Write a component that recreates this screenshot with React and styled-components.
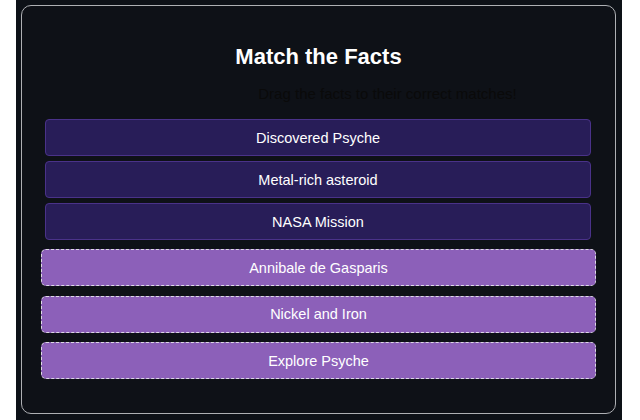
import React from 'react'
import { styled, createGlobalStyle } from 'styled-components'

const facts = ['Discovered Psyche', 'Metal-rich asteroid', 'NASA Mission']
const matches = ['Annibale de Gasparis', 'Nickel and Iron', 'Explore Psyche']

function App() {
  return (
    <>
      <GlobalStyle />
      <Page>
        <Card>
          <Title>Match the Facts</Title>
          <Subtitle>Drag the facts to their correct matches!</Subtitle>
          <FactList>
            {facts.map((fact) => (
              <Fact key={fact}>{fact}</Fact>
            ))}
          </FactList>
          <MatchList>
            {matches.map((match) => (
              <Match key={match}>{match}</Match>
            ))}
          </MatchList>
        </Card>
      </Page>
    </>
  )
}

const GlobalStyle = createGlobalStyle`
    html, body {
        margin: 0;
        padding: 0;
        background-color: #ffffff;
    }
    * {
        box-sizing: border-box;
    }
`;

const Page = styled.div`
    width: 606px;
    height: 420px;
    margin-left: 16px;
    padding: 5px 6px 6px 5px;
    background-color: #0d1117;
    font-family: "Liberation Sans", Arial, sans-serif;
`;

const Card = styled.div`
    width: 100%;
    height: 100%;
    border: 1px solid #aeb0b4;
    border-radius: 10px;
    background-color: #0e1117;
    padding-top: 37px;
    display: flex;
    flex-direction: column;
`;

const Title = styled.h2`
    margin: 0;
    text-align: center;
    font-size: 22px;
    line-height: 27px;
    font-weight: bold;
    color: #ffffff;
`;

const Subtitle = styled.p`
    margin: 15px 0 0 0;
    padding-left: 138px;
    text-align: center;
    font-size: 15px;
    line-height: 18px;
    color: #0a0a0a;
`;

const FactList = styled.div`
    display: flex;
    flex-direction: column;
    gap: 5px;
    margin-top: 16px;
    padding: 0 24px 0 23px;
`;

const Fact = styled.div`
    height: 37px;
    display: flex;
    align-items: center;
    justify-content: center;
    background-color: #281d58;
    border: 1px solid #4a3289;
    border-radius: 4px;
    color: #ffffff;
    font-size: 14.5px;
`;

const MatchList = styled.div`
    display: flex;
    flex-direction: column;
    gap: 9.5px;
    margin-top: 9px;
    padding: 0 19px;
`;

const Match = styled.div`
    height: 37px;
    display: flex;
    align-items: center;
    justify-content: center;
    background-color: #8c60b9;
    border: 1px dashed #dcd8e4;
    border-radius: 5px;
    color: #ffffff;
    font-size: 14.5px;
`;

export default App
